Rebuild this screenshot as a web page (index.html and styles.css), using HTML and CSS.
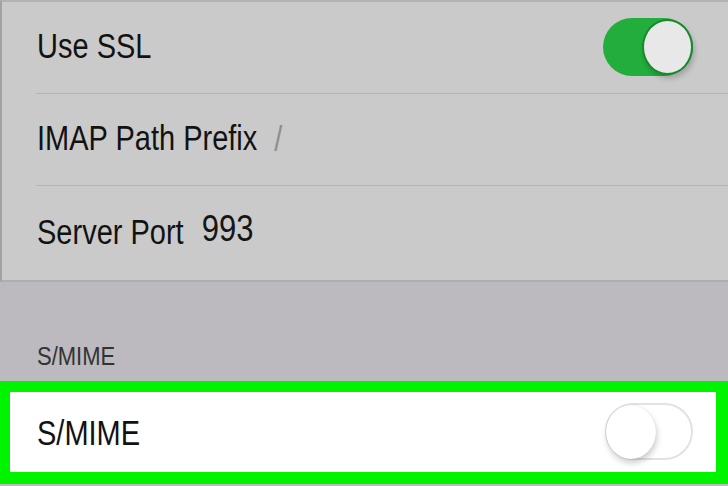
FILE: index.html
```html
<!DOCTYPE html>
<html>
<head>
<meta charset="utf-8">
<link rel="stylesheet" href="styles.css">
</head>
<body>
<div class="page">
  <div class="list">
    <div class="row">
      <span class="label">Use SSL</span>
      <div class="toggle on"><div class="knob"></div></div>
    </div>
    <div class="row">
      <span class="label">IMAP Path Prefix</span>
      <span class="value slash">/</span>
    </div>
    <div class="row last">
      <span class="label">Server Port</span>
      <span class="value num">993</span>
    </div>
  </div>
  <div class="section">
    <span class="section-title">S/MIME</span>
  </div>
  <div class="highlight">
    <span class="label hl-label">S/MIME</span>
    <div class="toggle off"><div class="knob"></div></div>
  </div>
</div>
</body>
</html>
```
FILE: styles.css
```css
html, body {
  margin: 0;
  padding: 0;
}
body {
  width: 728px;
  height: 486px;
  overflow: hidden;
  font-family: "Liberation Sans", Arial, sans-serif;
  color: #111;
}
.page {
  width: 728px;
  height: 486px;
  display: flex;
  flex-direction: column;
  background: #bcbabe;
}
.list {
  background: #cacaca;
  border-top: 2px solid #b2b2b2;
  border-left: 2px solid #a2a2a2;
  border-bottom: 2px solid #aeaeae;
  padding-left: 34px;
}
.row {
  height: 91px;
  display: flex;
  align-items: center;
  border-bottom: 1px solid #b4b4b4;
  padding-right: 35px;
}
.row.last {
  height: 94px;
  border-bottom: none;
}
.label {
  display: inline-block;
  font-size: 29px;
  margin-left: 1px;
  transform: scaleY(1.2);
  transform-origin: 50% 60%;
  color: #121212;
}
.hl-label {
  margin-top: 5px;
}
.value {
  display: inline-block;
  font-size: 29px;
  transform: scaleY(1.2);
}
.slash {
  color: #8e8e8e;
  margin-left: 17px;
}
.num {
  font-size: 31px;
  margin-left: 18px;
  margin-top: -8px;
  color: #151515;
}
.toggle {
  margin-left: auto;
  position: relative;
  box-sizing: border-box;
}
.toggle.on {
  width: 90px;
  height: 58px;
  border-radius: 29px;
  background: #22ad3c;
  margin-top: -1px;
}
.toggle.on .knob {
  position: absolute;
  right: 0;
  top: 1px;
  width: 51px;
  height: 56px;
  box-sizing: border-box;
  border-radius: 50%;
  background: #e8e8e8;
  border: 2px solid #188a2d;
  box-shadow: 2px 4px 5px rgba(0, 0, 0, 0.18);
}
.section {
  height: 99px;
  display: flex;
  align-items: flex-end;
  padding-left: 37px;
  box-sizing: border-box;
  padding-bottom: 11px;
}
.section-title {
  display: inline-block;
  font-size: 22px;
  color: #333;
  transform: scaleY(1.15);
}
.highlight {
  box-sizing: border-box;
  height: 103px;
  border: solid #00f400;
  border-width: 11px 12px 12px 10px;
  background: #fff;
  display: flex;
  align-items: center;
  padding-left: 26px;
  padding-right: 23px;
}
.toggle.off {
  width: 88px;
  height: 57px;
  border-radius: 29px;
  border: 2px solid #e2e2e2;
  background: #fff;
  margin-top: -2px;
}
.toggle.off .knob {
  position: absolute;
  left: -1px;
  top: 0;
  width: 50px;
  height: 54px;
  border-radius: 50%;
  background: #fff;
  box-shadow: 1px 4px 6px rgba(0, 0, 0, 0.2), 0 0 1px rgba(0, 0, 0, 0.15);
}
```
